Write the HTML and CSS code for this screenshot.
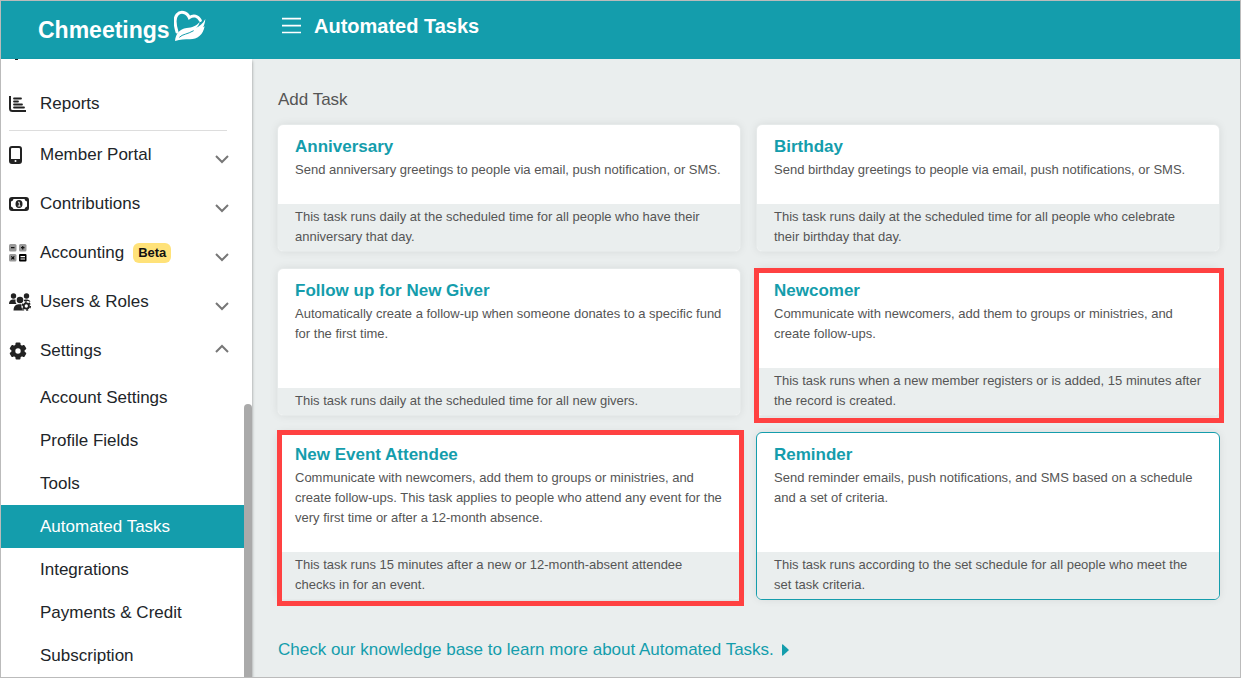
FILE: index.html
```html
<!DOCTYPE html>
<html lang="en">
<head>
<meta charset="utf-8">
<title>Automated Tasks</title>
<link rel="stylesheet" href="styles.css">
</head>
<body>
<div class="app">
  <header class="topbar">
    <a class="brand" href="#">
      <span class="brand-name">Chmeetings</span>
      <svg class="brand-mark" viewBox="0 0 96 96" aria-hidden="true">
        <path d="M9 66C3 46-1 26 9 14c10-12 30-9 37 9 12-9 26-6 33 8" fill="none" stroke="#fff" stroke-width="9" stroke-linecap="round"/>
        <path d="M3 93C5 72 16 57 38 54c16-2 30-6 39-19-1 9-6 15-12 19 13-5 21-13 29-27-1 12-4 20-7 25 2-1 4-2 5-3-5 26-22 39-44 39C32 88 20 88 3 93z" fill="#fff"/>
        <path d="M16 82c10-10 24-9 43-20" fill="none" stroke="#149dac" stroke-width="3"/>
      </svg>
    </a>
    <button class="menu-toggle" type="button" aria-label="Toggle menu">
      <svg width="19" height="18" viewBox="0 0 19 18"><path d="M0 1.700h19M0 8.600h19M0 15.500h19" stroke="#fff" stroke-width="1.700"/></svg>
    </button>
    <h1 class="page-title">Automated Tasks</h1>
  </header>

  <div class="layout">
    <aside class="sidebar">
      <nav class="nav">
        <div class="nav-lead"><span class="nav-lead-mark"></span></div>
        <a class="nav-item" href="#">
          <svg class="nav-icon" viewBox="0 0 18 18"><path d="M1 1v12.500q0 2.500 2.500 2.500H17" fill="none" stroke="#222" stroke-width="2"/><path d="M5 3.500h7M5 6.500h4M5 9.500h8M5 12.500h10" stroke="#222" stroke-width="1.800" stroke-linecap="round"/></svg>
          <span>Reports</span>
        </a>
        <hr class="nav-rule">
        <button class="nav-item" type="button">
          <svg class="nav-icon" viewBox="0 0 18 18"><rect x="1" y="1" width="11" height="16" rx="2" fill="none" stroke="#222" stroke-width="2"/><path d="M1 13h11v4H1z" fill="#222"/><circle cx="6.500" cy="15" r="1" fill="#fff"/></svg>
          <span>Member Portal</span>
          <svg class="chevron" viewBox="0 0 14 20"><path d="M1 11l6 6 6-6"/></svg>
        </button>
        <button class="nav-item" type="button">
          <svg class="nav-icon nav-icon-wide" viewBox="0 0 20 18"><rect x="1" y="3" width="18" height="12" rx="2" fill="none" stroke="#222" stroke-width="2"/><path d="M2 4h2.500q-.5 2-2.500 2.500zM18 4h-2.500q.5 2 2.500 2.500zM2 14h2.500q-.5-2-2.500-2.500zM18 14h-2.500q.5-2 2.500-2.500z" fill="#222"/><ellipse cx="10" cy="9" rx="3.500" ry="4" fill="#222"/><path d="M9 7.200h1.300V11M8.800 11h2.800" stroke="#fff" stroke-width=".9" fill="none"/></svg>
          <span>Contributions</span>
          <svg class="chevron" viewBox="0 0 14 20"><path d="M1 11l6 6 6-6"/></svg>
        </button>
        <button class="nav-item" type="button">
          <svg class="nav-icon" viewBox="0 0 18 18"><g fill="#999"><rect width="7.500" height="7.500" rx="1.500"/><rect x="10" width="7.500" height="7.500" rx="1.500"/><rect y="10" width="7.500" height="7.500" rx="1.500"/></g><rect x="10" y="10" width="7.500" height="7.500" rx="1" fill="#000"/><path d="M2 3.700h3.500M12 3.700h3.500M13.750 2v3.500M2.300 12.300l3 3M5.300 12.300l-3 3" stroke="#111" stroke-width="1.200"/><path d="M11.500 12.600h4.500M11.500 15h4.500" stroke="#fff" stroke-width="1.200"/></svg>
          <span>Accounting</span>
          <span class="badge">Beta</span>
          <svg class="chevron" viewBox="0 0 14 20"><path d="M1 11l6 6 6-6"/></svg>
        </button>
        <button class="nav-item" type="button">
          <svg class="nav-icon nav-icon-xwide" viewBox="0 0 22 18"><g fill="#222"><circle cx="4.500" cy="3" r="2.700"/><circle cx="17.500" cy="3" r="2.700"/><circle cx="11" cy="7" r="3.300"/><path d="M0 11q0-4 3.500-4.500h3Q6 9 7.500 11zM14.800 8q0-1.500 1-1.500h2.500Q21 6.500 21.500 9l-3-1zM4.500 17.500q0-6 5-6.300h3q1.500 3.300 3 6.300z"/></g><circle cx="17.300" cy="13" r="5" fill="#fff"/><circle cx="17.300" cy="13" r="2.600" fill="none" stroke="#222" stroke-width="1.900"/><circle cx="17.300" cy="13" r="4" fill="none" stroke="#222" stroke-width="1.500" stroke-dasharray="2.100 2.090"/></svg>
          <span>Users &amp; Roles</span>
          <svg class="chevron" viewBox="0 0 14 20"><path d="M1 11l6 6 6-6"/></svg>
        </button>
        <button class="nav-item" type="button" aria-expanded="true">
          <svg class="nav-icon" viewBox="0 0 18 18"><circle cx="9" cy="9" r="4.700" fill="none" stroke="#222" stroke-width="4"/><g fill="#222"><rect id="tooth" x="6.500" y="0.500" width="5" height="4" rx="1"/><use href="#tooth" transform="rotate(60 9 9)"/><use href="#tooth" transform="rotate(120 9 9)"/><use href="#tooth" transform="rotate(180 9 9)"/><use href="#tooth" transform="rotate(240 9 9)"/><use href="#tooth" transform="rotate(300 9 9)"/></g></svg>
          <span>Settings</span>
          <svg class="chevron" viewBox="0 0 14 20"><path d="M1 11l6-6 6 6"/></svg>
        </button>
        <div class="subnav">
          <a class="subnav-item" href="#">Account Settings</a>
          <a class="subnav-item" href="#">Profile Fields</a>
          <a class="subnav-item" href="#">Tools</a>
          <a class="subnav-item subnav-active" href="#" aria-current="page">Automated Tasks</a>
          <a class="subnav-item" href="#">Integrations</a>
          <a class="subnav-item" href="#">Payments &amp; Credit</a>
          <a class="subnav-item" href="#">Subscription</a>
        </div>
      </nav>
      <div class="scroll-track"><div class="scroll-thumb"></div></div>
    </aside>

    <main class="content">
      <h2 class="section-title">Add Task</h2>
      <div class="cards">
        <a class="card" href="#">
          <div class="card-body"><h3 class="card-title">Anniversary</h3><p class="card-text">Send anniversary greetings to people via email, push notification, or SMS.</p></div>
          <p class="card-foot">This task runs daily at the scheduled time for all people who have their anniversary that day.</p>
        </a>
        <a class="card" href="#">
          <div class="card-body"><h3 class="card-title">Birthday</h3><p class="card-text">Send birthday greetings to people via email, push notifications, or SMS.</p></div>
          <p class="card-foot">This task runs daily at the scheduled time for all people who celebrate their birthday that day.</p>
        </a>
        <a class="card" href="#">
          <div class="card-body"><h3 class="card-title">Follow up for New Giver</h3><p class="card-text">Automatically create a follow-up when someone donates to a specific fund for the first time.</p></div>
          <p class="card-foot">This task runs daily at the scheduled time for all new givers.</p>
        </a>
        <a class="card card-marked" href="#">
          <div class="card-body"><h3 class="card-title">Newcomer</h3><p class="card-text">Communicate with newcomers, add them to groups or ministries, and create follow-ups.</p></div>
          <p class="card-foot">This task runs when a new member registers or is added, 15 minutes after the record is created.</p>
        </a>
        <a class="card card-marked card-marked-start" href="#">
          <div class="card-body"><h3 class="card-title">New Event Attendee</h3><p class="card-text">Communicate with newcomers, add them to groups or ministries, and create follow-ups. This task applies to people who attend any event for the very first time or after a 12-month absence.</p></div>
          <p class="card-foot">This task runs 15 minutes after a new or 12-month-absent attendee checks in for an event.</p>
        </a>
        <a class="card card-active" href="#">
          <div class="card-body"><h3 class="card-title">Reminder</h3><p class="card-text">Send reminder emails, push notifications, and SMS based on a schedule and a set of criteria.</p></div>
          <p class="card-foot">This task runs according to the set schedule for all people who meet the set task criteria.</p>
        </a>
      </div>
      <a class="help-link" href="#">Check our knowledge base to learn more about Automated Tasks.
        <svg width="7" height="12" viewBox="0 0 7 12"><path d="M0 1Q0 0 1 .5L6.500 5.500Q7 6 6.500 6.500L1 11.500Q0 12 0 11z" fill="#149dac"/></svg>
      </a>
    </main>
  </div>
</div>
</body>
</html>
```
FILE: styles.css
```css
* { box-sizing: border-box; }

body {
  margin: 0;
  font-family: "Liberation Sans", Arial, sans-serif;
  color: #212529;
  background: #eaeeee;
}

h1, h2, h3, p { margin: 0; }
a { color: inherit; text-decoration: none; }
button { border: 0; padding: 0; background: none; font: inherit; color: inherit; cursor: pointer; }

.app {
  display: flex;
  flex-direction: column;
  height: 100vh;
  border: 1px solid #bbb;
  overflow: hidden;
}

.topbar {
  display: flex;
  flex: none;
  align-items: flex-start;
  height: 58px;
  padding-left: 37px;
  background: #149dac;
  color: #fff;
}

.brand { display: flex; width: 244px; gap: 4px; }
.brand-name { padding-top: 15px; font-size: 23px; font-weight: 700; line-height: 28px; }
.brand-mark { width: 32px; height: 32px; margin-top: 9px; }
.menu-toggle { display: flex; margin-top: 16px; }
.page-title { margin-left: 13px; font-size: 20px; line-height: 24px; padding-top: 13px; }

.layout { display: flex; flex: 1; min-height: 0; }

.sidebar {
  display: flex;
  flex: none;
  width: 251px;
  overflow: hidden;
  background: #fff;
  box-shadow: 0 2px 3px rgba(0, 0, 0, 0.4);
}

.nav { flex: 1; font-size: 17px; }
.nav-lead { height: 20px; padding-left: 14px; }
.nav-lead-mark { display: block; width: 3px; height: 1px; background: #222; }

.nav-item {
  display: flex;
  align-items: center;
  width: 100%;
  height: 49px;
  padding: 0 15px 0 8px;
  text-align: left;
}

.nav-icon { width: 18px; height: 18px; margin-right: 13px; flex: none; }
.nav-icon-wide { width: 20px; margin-right: 11px; }
.nav-icon-xwide { width: 22px; margin-right: 9px; }
.nav-rule { height: 1px; margin: 2px 17px -1px 8px; border: 0; background: #ddd; }
.chevron { width: 14px; height: 20px; margin-left: auto; fill: none; stroke: #777; stroke-width: 2; }

.badge {
  margin-left: 9px;
  padding: 0 5px;
  border-radius: 6px;
  background: #ffe279;
  color: #111;
  font-size: 13px;
  font-weight: 700;
  line-height: 20px;
}

.subnav { padding-top: 1px; }
.subnav-item { display: block; padding-left: 39px; line-height: 43px; }
.subnav-active { background: #149dac; color: #fff; }

.scroll-track { width: 8px; padding-top: 345px; }
.scroll-thumb { height: 100%; border-radius: 4px 4px 0 0; background: #aaa; }

.content { flex: 1; padding: 31px 20px 0 25px; }
.section-title { margin-bottom: 14px; padding-left: 1px; color: #555; font-size: 17px; font-weight: 400; line-height: 20px; }

.cards { display: grid; grid-template-columns: 1fr 1fr; gap: 16px 15px; }

.card {
  position: relative;
  display: flex;
  flex-direction: column;
  border: 1px solid #e6eaea;
  border-radius: 6px;
  background: #fff;
  box-shadow: 0 0 8px rgba(0, 0, 0, 0.08);
  color: #555;
  font-size: 13px;
  line-height: 20px;
}

.card-active { border-color: #149dac; }
.card-body { flex: 1; padding: 12px 16px 24px 17px; }
.card-title { margin-bottom: 3px; color: #149dac; font-size: 17px; line-height: 20px; }
.card-foot { padding: 3px 16px 4px 17px; border-radius: 0 0 5px 5px; background: #eaeeee; }

.card-marked::after {
  content: "";
  position: absolute;
  z-index: 1;
  inset: -1px -5px -8px -3px;
  border: 5px solid #ff4141;
}
.card-marked-start::after { inset: -3px -4px -7px -1px; }

.help-link {
  display: flex;
  align-items: center;
  gap: 8px;
  margin-top: 40px;
  padding-left: 1px;
  color: #149dac;
  font-size: 17px;
  line-height: 20px;
}
```
